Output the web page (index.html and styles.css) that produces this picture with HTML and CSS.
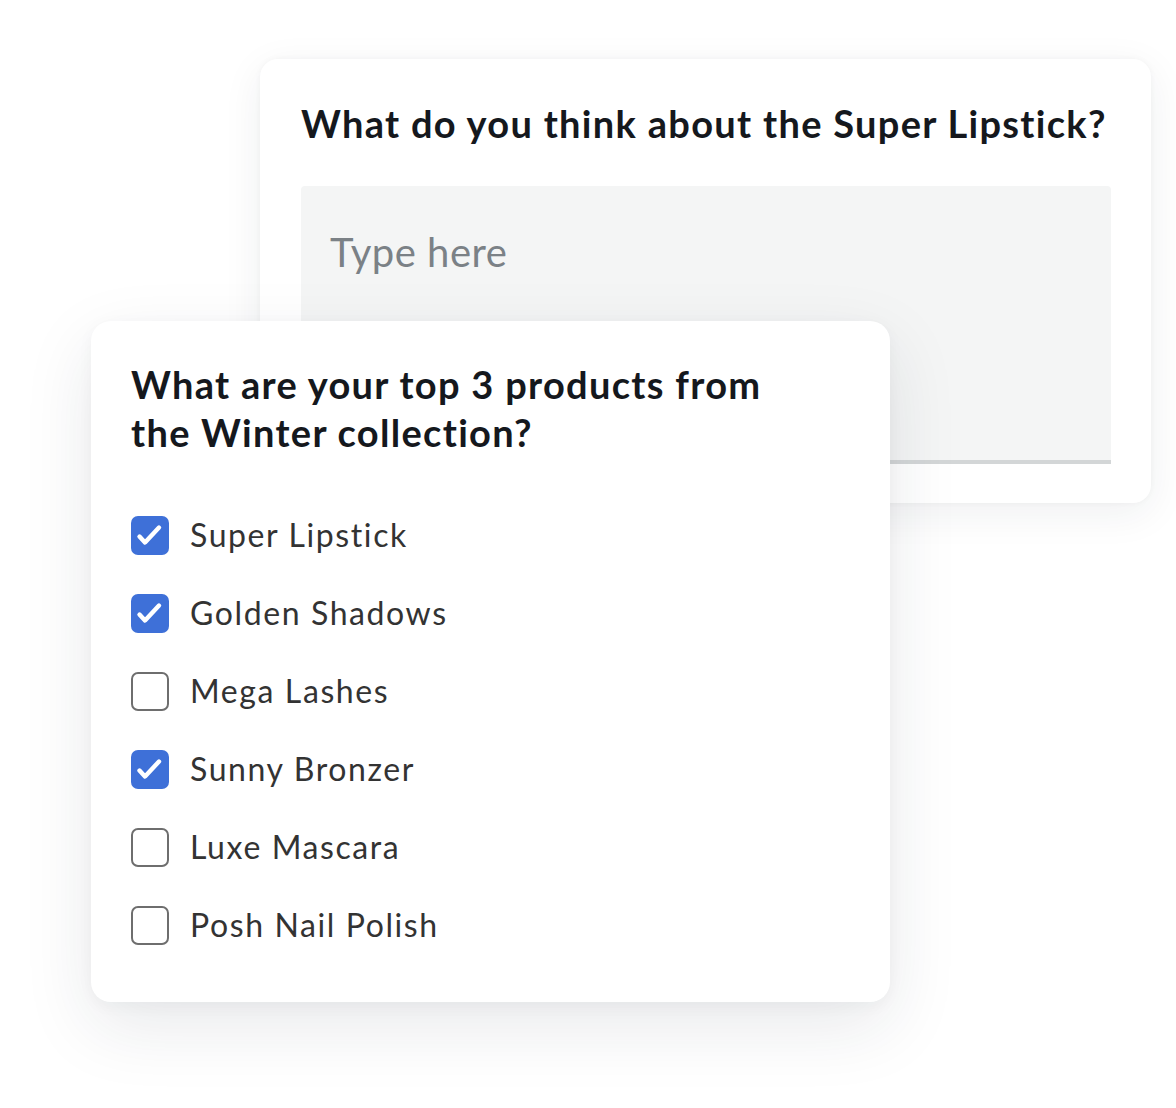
FILE: index.html
```html
<!DOCTYPE html>
<html lang="en">
<head>
<meta charset="utf-8">
<title>Survey</title>
<link rel="stylesheet" href="styles.css">
</head>
<body>
<div class="scene">
  <section class="card card-back">
    <h2 class="question">What do you think about the Super Lipstick?</h2>
    <div class="textbox"><span class="placeholder">Type here</span></div>
  </section>
  <section class="card card-front">
    <h2 class="question">What are your top 3 products from<br>the Winter collection?</h2>
    <ul class="options">
      <li class="option"><span class="box checked"><svg viewBox="0 0 38 38" width="38" height="38"><path d="M8.5 20.5 L14 26.5 L28 11.5" fill="none" stroke="#fff" stroke-width="4.4" stroke-linecap="round" stroke-linejoin="round"/></svg></span><span class="label">Super Lipstick</span></li>
      <li class="option"><span class="box checked"><svg viewBox="0 0 38 38" width="38" height="38"><path d="M8.5 20.5 L14 26.5 L28 11.5" fill="none" stroke="#fff" stroke-width="4.4" stroke-linecap="round" stroke-linejoin="round"/></svg></span><span class="label">Golden Shadows</span></li>
      <li class="option"><span class="box"></span><span class="label">Mega Lashes</span></li>
      <li class="option"><span class="box checked"><svg viewBox="0 0 38 38" width="38" height="38"><path d="M8.5 20.5 L14 26.5 L28 11.5" fill="none" stroke="#fff" stroke-width="4.4" stroke-linecap="round" stroke-linejoin="round"/></svg></span><span class="label">Sunny Bronzer</span></li>
      <li class="option"><span class="box"></span><span class="label">Luxe Mascara</span></li>
      <li class="option"><span class="box"></span><span class="label">Posh Nail Polish</span></li>
    </ul>
  </section>
</div>
</body>
</html>
```
FILE: styles.css
```css
html, body {
  margin: 0;
  padding: 0;
  background: #ffffff;
}
body {
  font-family: Lato, "Noto Sans", "Liberation Sans", sans-serif;
  color: #15181d;
}
.scene {
  position: relative;
  width: 1176px;
  height: 1108px;
  padding: 59px 0 0 260px;
  box-sizing: border-box;
}
.card {
  background: #ffffff;
  box-sizing: border-box;
  padding: 40px;
}
.card-back {
  width: 891px;
  height: 444px;
  border-radius: 18px;
  box-shadow: 0 10px 40px rgba(30, 40, 60, 0.07), 0 0 6px rgba(30, 40, 60, 0.04);
  padding: 40px 40px 39px 41px;
}
.question {
  margin: 0;
  font-size: 38px;
  line-height: 48px;
  font-weight: 700;
  color: #15181d;
  letter-spacing: 1.3px;
}
.card-back .question {
  margin-bottom: 39px;
  white-space: nowrap;
}
.textbox {
  height: 278px;
  box-sizing: border-box;
  background: #f4f5f5;
  border-bottom: 4px solid #d3d6d7;
  border-radius: 4px 4px 0 0;
  padding: 42px 29px 0;
}
.placeholder {
  font-size: 40px;
  line-height: 48px;
  letter-spacing: 0.5px;
  color: #7b8186;
}
.card-front {
  position: absolute;
  left: 91px;
  top: 321px;
  width: 799px;
  height: 681px;
  border-radius: 20px;
  padding: 39px 40px 38px 40px;
  box-shadow: 0 24px 70px rgba(30, 40, 60, 0.10), 0 4px 16px rgba(30, 40, 60, 0.04);
}
.options {
  list-style: none;
  margin: 40px 0 0;
  padding: 0;
  display: flex;
  flex-direction: column;
}
.option {
  height: 78px;
  display: flex;
  align-items: center;
  gap: 21px;
}
.box {
  width: 38px;
  height: 39px;
  box-sizing: border-box;
  border: 2.5px solid #6e6e6e;
  border-radius: 7px;
  flex: none;
  display: flex;
  align-items: center;
  justify-content: center;
}
.box.checked {
  background: #3e70d8;
  border: none;
}
.box svg {
  display: block;
}
.label {
  font-size: 32px;
  line-height: 40px;
  letter-spacing: 1.6px;
  color: #333333;
}
```
